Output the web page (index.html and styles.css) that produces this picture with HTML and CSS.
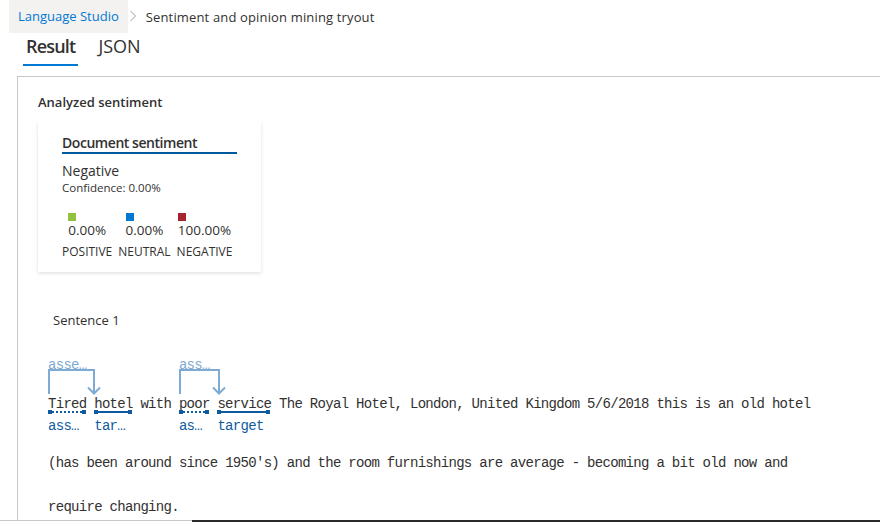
FILE: index.html
```html
<!DOCTYPE html>
<html lang="en">
<head>
<meta charset="utf-8">
<title>Sentiment and opinion mining tryout</title>
<link rel="stylesheet" href="styles.css">
</head>
<body>
<div class="page">
  <nav class="breadcrumb">
    <span class="crumb-link">Language Studio</span>
    <svg class="chev" width="18" height="33" viewBox="0 0 18 33"><polyline points="2.5,11 7.5,16 2.5,21" fill="none" stroke="#a19f9d" stroke-width="1"/></svg>
    <span class="crumb-current">Sentiment and opinion mining tryout</span>
  </nav>
  <div class="tabs">
    <div class="tab active">Result</div>
    <div class="tab">JSON</div>
  </div>
  <section class="panel">
    <h2 class="section-title">Analyzed sentiment</h2>
    <div class="card">
      <div class="card-title">Document sentiment</div>
      <div class="doc-label">Negative</div>
      <div class="confidence">Confidence: 0.00%</div>
      <div class="metrics">
        <div class="metric">
          <div class="metric-val"><span class="swatch sw-pos"></span><span class="pct">0.00%</span></div>
          <div class="metric-name">POSITIVE</div>
        </div>
        <div class="metric">
          <div class="metric-val"><span class="swatch sw-neu"></span><span class="pct">0.00%</span></div>
          <div class="metric-name">NEUTRAL</div>
        </div>
        <div class="metric">
          <div class="metric-val"><span class="swatch sw-neg"></span><span class="pct">100.00%</span></div>
          <div class="metric-name">NEGATIVE</div>
        </div>
      </div>
    </div>
    <div class="sentence">
      <div class="sentence-title">Sentence 1</div>
      <div class="line1">
        <div class="rel">
          <div class="rel-top">
            <svg class="bracket" width="54" height="38" viewBox="0 0 54 38"><path d="M1 38V14H46V37" fill="none" stroke="#7eaad3" stroke-width="2"/><path d="M40 31.5L46 37.5L52 31.5" fill="none" stroke="#7eaad3" stroke-width="2"/></svg>
            <span class="rel-label">asse…</span>
          </div>
          <div class="rel-words">
            <div class="tok"><span class="word">Tired</span><span class="ul ul-dot"></span><span class="lab">ass…</span></div>
            <div class="tok"><span class="word">hotel</span><span class="ul"></span><span class="lab">tar…</span></div>
          </div>
        </div>
        <div class="tok plain"><span class="word">with</span></div>
        <div class="rel">
          <div class="rel-top">
            <svg class="bracket" width="48" height="38" viewBox="0 0 48 38"><path d="M1 38V14H40V37" fill="none" stroke="#7eaad3" stroke-width="2"/><path d="M34 31.5L40 37.5L46 31.5" fill="none" stroke="#7eaad3" stroke-width="2"/></svg>
            <span class="rel-label">ass…</span>
          </div>
          <div class="rel-words">
            <div class="tok"><span class="word">poor</span><span class="ul ul-dot"></span><span class="lab">as…</span></div>
            <div class="tok"><span class="word">service</span><span class="ul"></span><span class="lab">target</span></div>
          </div>
        </div>
        <div class="tok plain"><span class="word">The Royal Hotel, London, United Kingdom 5/6/2018 this is an old hotel</span></div>
      </div>
      <div class="text-line">(has been around since 1950's) and the room furnishings are average - becoming a bit old now and</div>
      <div class="text-line">require changing.</div>
    </div>
  </section>
  <div class="footer"><span class="footer-a"></span><span class="footer-b"></span></div>
</div>
</body>
</html>
```
FILE: styles.css
```css
* { box-sizing: border-box; }
html, body { margin: 0; padding: 0; }
body {
  width: 880px;
  height: 522px;
  overflow: hidden;
  background: #ffffff;
  color: #323130;
  font-family: "Open Sans", "Noto Sans", sans-serif;
}
.page { display: flex; flex-direction: column; height: 522px; }

.breadcrumb {
  display: flex;
  align-items: center;
  height: 33px;
  padding-left: 9px;
  font-size: 13px;
}
.crumb-link {
  background: #f3f2f1;
  color: #0078d4;
  line-height: 33px;
  padding: 0 9px;
}
.chev { display: block; }
.crumb-current { color: #323130; letter-spacing: 0.15px; }

.tabs {
  display: flex;
  gap: 17px;
  padding-left: 23px;
  margin-bottom: 10px;
}
.tab {
  font-size: 18px;
  line-height: 26px;
  padding: 0 3px 5px;
  border-bottom: 2px solid transparent;
  color: #323130;
}
.tab.active { font-weight: 600; letter-spacing: -0.8px; border-bottom-color: #0078d4; }

.panel {
  margin-left: 17px;
  height: 444px;
  border-top: 1px solid #c8c8c8;
  border-left: 1px solid #c8c8c8;
  padding: 16px 0 0 20px;
  overflow: hidden;
}
.section-title {
  margin: 0 0 10px;
  font-size: 13px;
  line-height: 18px;
  font-weight: 600;
}
.card {
  width: 223px;
  height: 151px;
  padding: 12px 0 0 24px;
  box-shadow: 0 1.6px 3.6px rgba(0,0,0,0.13), 0 0.3px 0.9px rgba(0,0,0,0.11);
}
.card-title {
  width: 175px;
  font-size: 14px;
  line-height: 19px;
  font-weight: 600;
  letter-spacing: -0.45px;
  border-bottom: 2px solid #005a9e;
}
.doc-label { margin-top: 7px; font-size: 14px; line-height: 20px; }
.confidence { font-size: 11.5px; line-height: 14px; }
.metrics { display: flex; gap: 6px; margin-top: 18px; }
.metric { display: flex; flex-direction: column; align-items: center; }
.metric-val { display: flex; flex-direction: column; align-items: flex-start; }
.swatch { display: block; width: 8px; height: 8px; }
.sw-pos { background: #92c13e; }
.sw-neu { background: #0078d4; }
.sw-neg { background: #a4262c; }
.pct { font-size: 13.5px; line-height: 18px; }
.metric-name { margin-top: 5px; font-size: 12px; line-height: 16px; }

.sentence { margin-top: 39px; padding-left: 10px; }
.sentence-title { padding-left: 5px; font-size: 13px; line-height: 18px; }

.line1, .text-line {
  font-family: "Liberation Mono", monospace;
  font-size: 14px;
  letter-spacing: -0.7px;
}
.word, .text-line, .rel-label, .lab { white-space: pre; }
.line1 { display: flex; align-items: flex-start; gap: 7.7px; margin-top: 27px; }
.rel { display: flex; flex-direction: column; }
.rel-top { position: relative; height: 38px; }
.bracket { display: block; overflow: visible; }
.rel-label {
  position: absolute;
  left: 0;
  top: -1px;
  line-height: 20px;
  color: #7eaad3;
}
.rel-words { display: flex; gap: 7.7px; }
.tok { display: flex; flex-direction: column; }
.tok.plain { margin-top: 38px; }
.word { display: block; line-height: 20px; color: #323130; }
.ul {
  position: relative;
  display: block;
  height: 2px;
  margin: -3px 1px 0 0;
  background: #0f5b9e;
}
.ul-dot {
  background: repeating-linear-gradient(to right, #0f5b9e 0 2px, transparent 2px 4px);
}
.ul::before, .ul::after {
  content: "";
  position: absolute;
  top: -1px;
  width: 4px;
  height: 4px;
  background: #0f5b9e;
}
.ul::before { left: 0; }
.ul::after { right: 0; }
.lab { display: block; margin-top: 3px; line-height: 20px; color: #0f5b9e; }
.text-line { margin-top: 5px; line-height: 44px; }
.text-line + .text-line { margin-top: 0; }

.footer { display: flex; height: 2px; }
.footer-a { width: 192px; border-top: 1px solid #c8c8c8; }
.footer-b { flex: 1; background: #2b2b2b; }
```
